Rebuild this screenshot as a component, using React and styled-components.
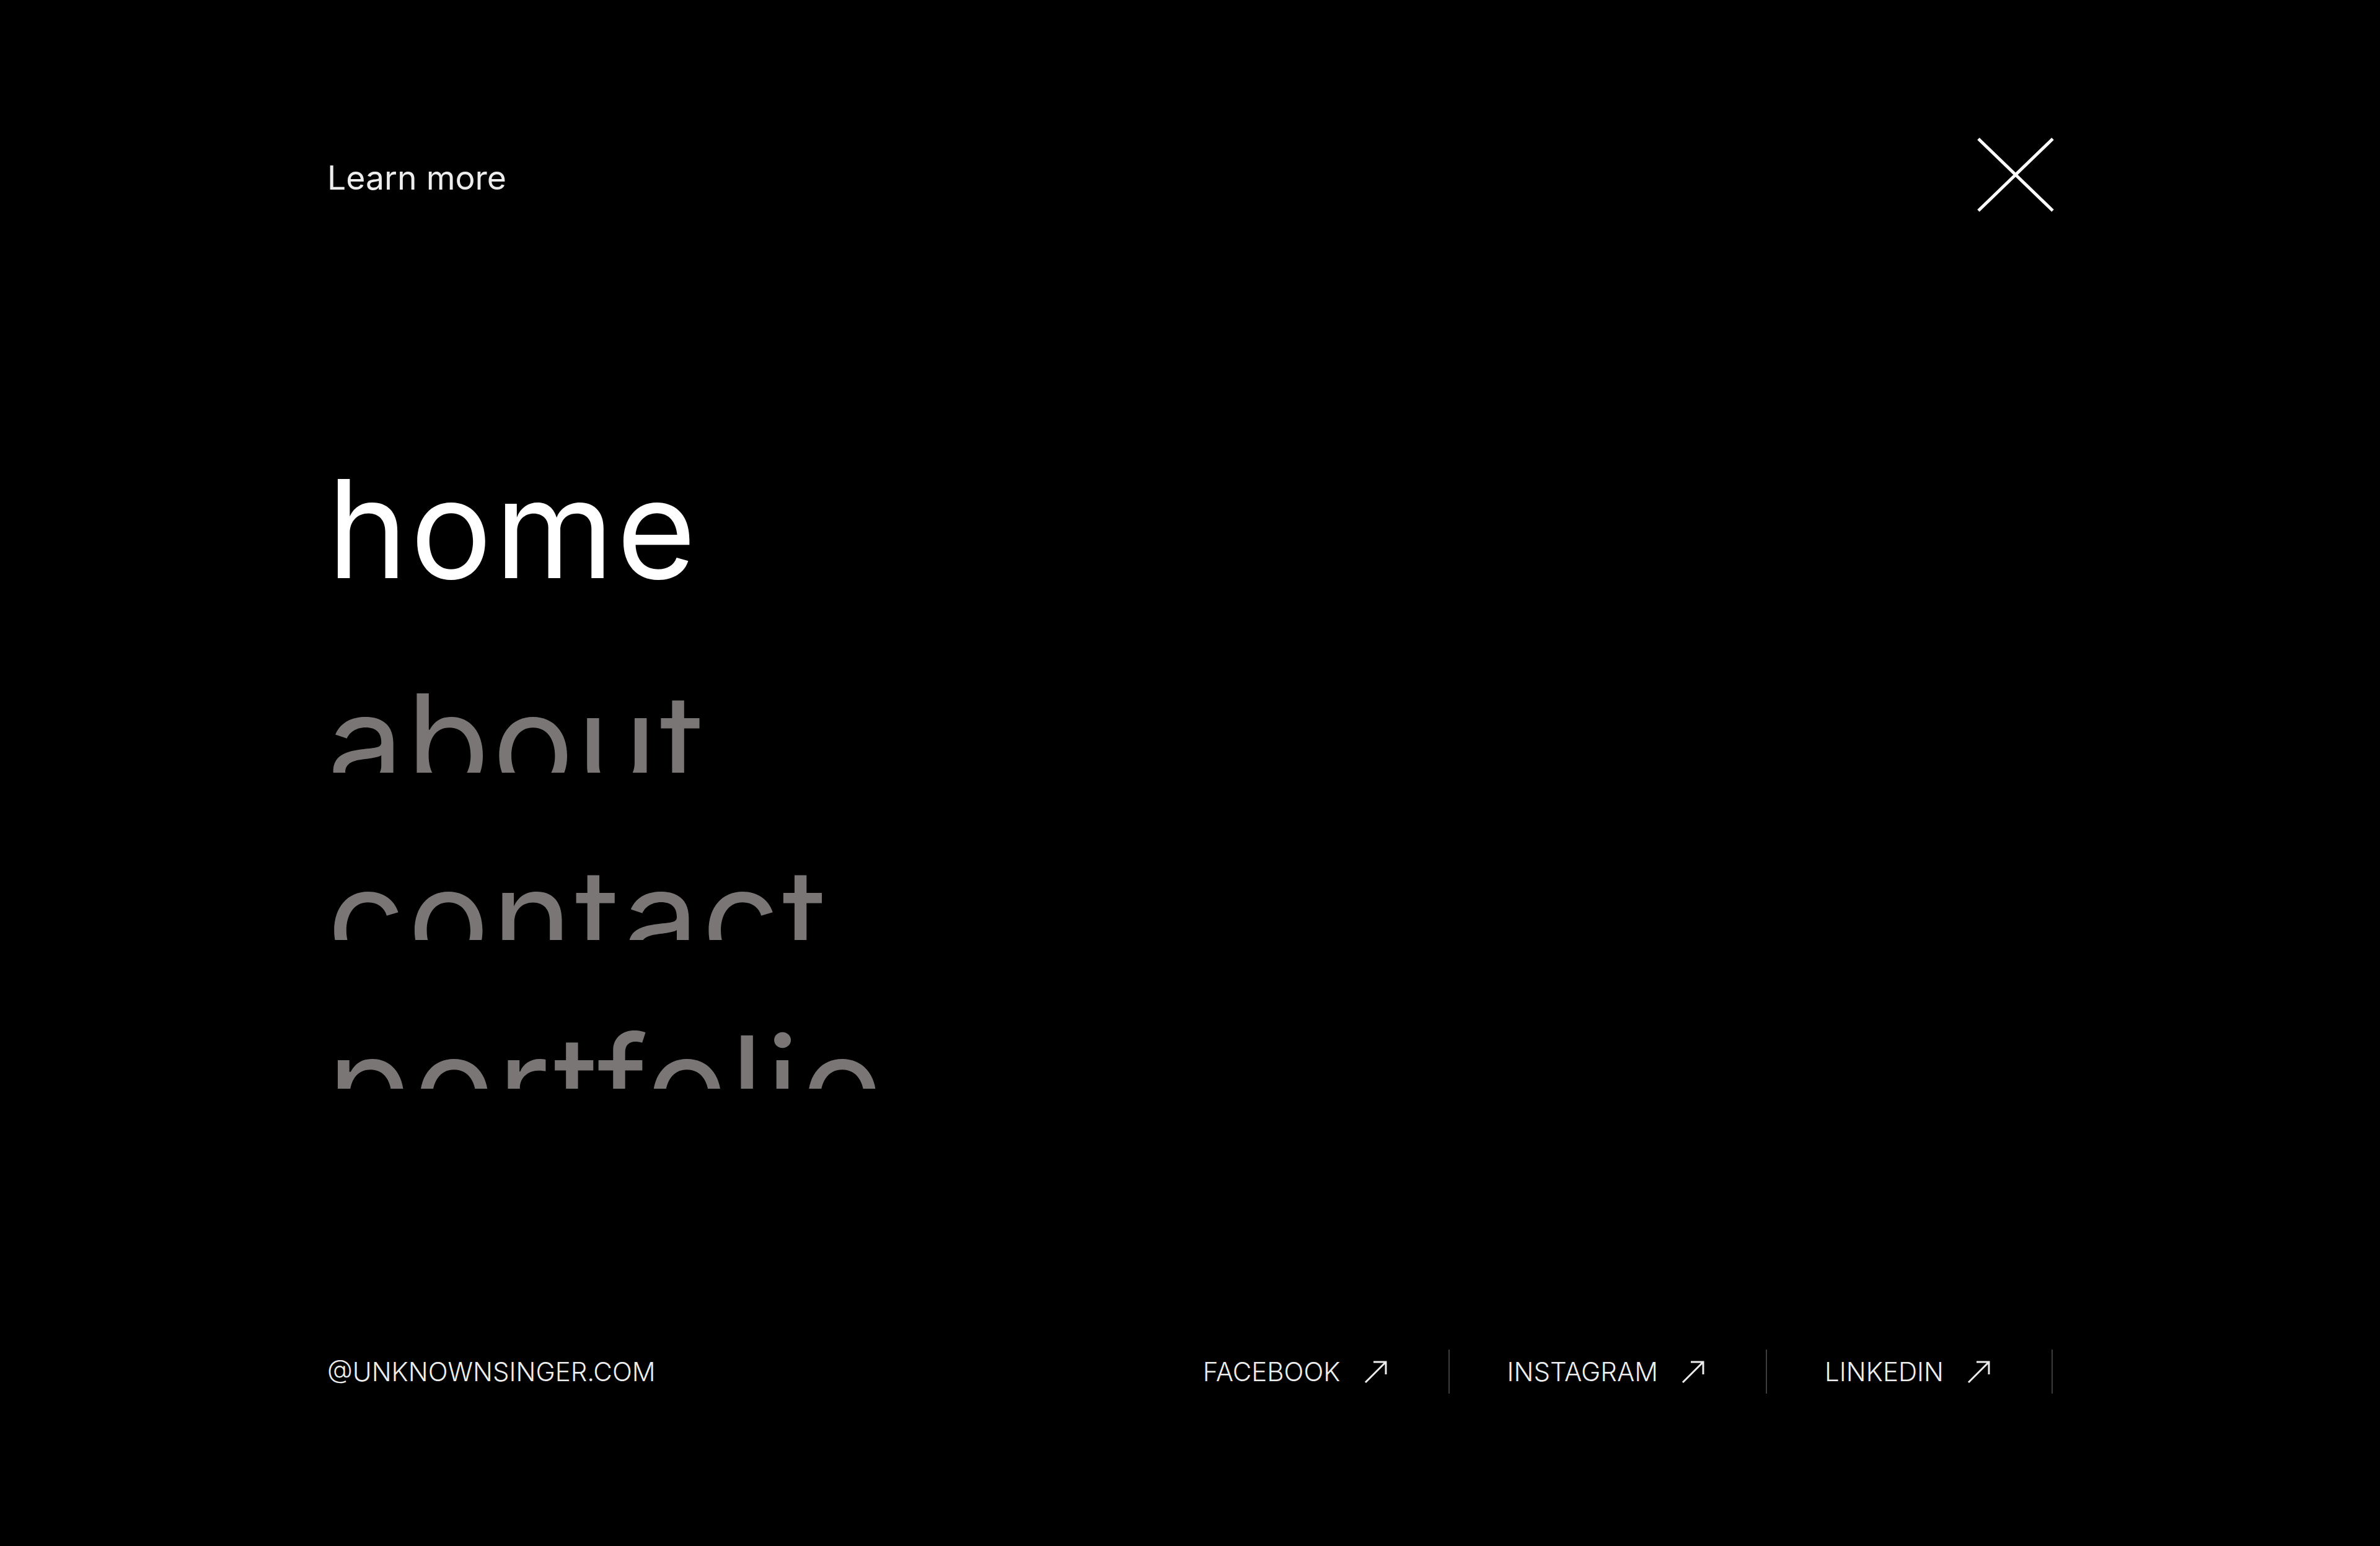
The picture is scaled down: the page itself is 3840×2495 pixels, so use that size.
import styled, { createGlobalStyle } from 'styled-components'

/* ── Tokens ── */
const T = {
  bg: '#000000',
  t1: '#ffffff',
  t2: '#ededed',
  muted: '#7a7676',
  rule: '#3d3d3d',
}

const Global = createGlobalStyle`
  html, body { margin: 0; padding: 0; background: ${T.bg}; }
  body { font-family: Inter, "Noto Sans", "Liberation Sans", sans-serif; }
  * { box-sizing: border-box; }
`

/* ── Layout ── */
const Page = styled.div`
  min-height: 100vh;
  display: flex;
  flex-direction: column;
  padding: 220px 528px 246px;
  background: ${T.bg};
  color: ${T.t1};
`

const Header = styled.header`
  display: flex;
  align-items: center;
  justify-content: space-between;
`

const LearnMore = styled.a`
  font-size: 53.5px;
  line-height: 1;
  font-weight: 400;
  color: ${T.t2};
  text-decoration: none;
  margin-top: 10px;
`

const CloseButton = styled.button`
  display: flex;
  padding: 0;
  margin-right: -4px;
  border: 0;
  background: none;
  cursor: pointer;
`

const Menu = styled.nav`
  display: flex;
  flex-direction: column;
  gap: 30px;
  margin-top: 399px;
`

const Row = styled.div`
  height: ${({ h }) => h}px;
  overflow: hidden;
`

const Word = styled.a`
  display: block;
  font-size: 220px;
  line-height: 1;
  font-weight: 400;
  letter-spacing: 4px;
  text-decoration: none;
  color: ${({ active }) => (active ? T.t1 : T.muted)};
`

const Footer = styled.footer`
  display: flex;
  align-items: center;
  justify-content: space-between;
  margin-top: auto;
`

const Email = styled.span`
  font-size: 42px;
  font-weight: 300;
  color: ${T.t2};
`

const Socials = styled.div`
  display: flex;
  align-items: center;
`

const Social = styled.a`
  display: flex;
  align-items: center;
  gap: 38px;
  height: 71px;
  padding: 0 98px 0 93px;
  border-right: 2px solid ${T.rule};
  font-size: 42px;
  font-weight: 300;
  color: ${T.t2};
  text-decoration: none;
`

function CloseIcon() {
  return (
    <svg width="128" height="124" viewBox="0 0 128 124" fill="none">
      <path d="M4 4 L124 120 M124 4 L4 120" stroke={T.t1} strokeWidth="5" />
    </svg>
  )
}

function Arrow() {
  return (
    <svg width="38" height="38" viewBox="0 0 38 38" fill="none">
      <path d="M2 36 L35 3 M15 3 H35 V23" stroke={T.t2} strokeWidth="3" />
    </svg>
  )
}

// current frame of the reveal animation: visible window + text offset per row
const ITEMS = [
  { label: 'home', h: 250, shift: 0, active: true },
  { label: 'about', h: 224, shift: 66 },
  { label: 'contact', h: 240, shift: 94 },
  { label: 'portfolio', h: 210, shift: 94 },
]

const SOCIALS = ['FACEBOOK', 'INSTAGRAM', 'LINKEDIN']

export default function App() {
  return (
    <Page>
      <Global />
      <Header>
        <LearnMore href="#">Learn more</LearnMore>
        <CloseButton type="button" aria-label="Close menu">
          <CloseIcon />
        </CloseButton>
      </Header>

      <Menu>
        {ITEMS.map((it) => (
          <Row key={it.label} h={it.h}>
            <Word href="#" active={it.active ? 1 : 0} style={{ transform: `translateY(${it.shift}px)` }}>
              {it.label}
            </Word>
          </Row>
        ))}
      </Menu>

      <Footer>
        <Email>@UNKNOWNSINGER.COM</Email>
        <Socials>
          {SOCIALS.map((s) => (
            <Social key={s} href="#">
              {s}
              <Arrow />
            </Social>
          ))}
        </Socials>
      </Footer>
    </Page>
  )
}
